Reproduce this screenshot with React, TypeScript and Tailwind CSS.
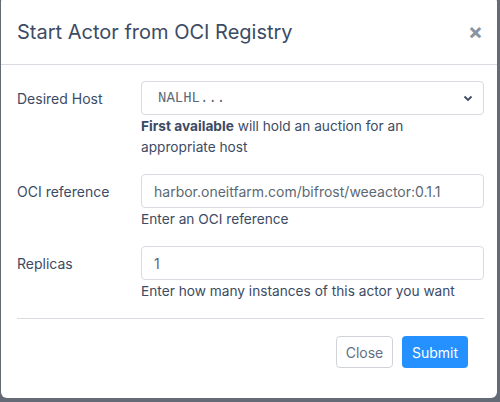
import React from 'react';

const font = { fontFamily: 'Inter, "Noto Sans", sans-serif' };

function Field({ label, children, help }: { label: string; children: React.ReactNode; help: React.ReactNode }) {
  return (
    <div className="flex mb-4">
      <div className="w-[124px] h-[34px] flex items-center text-[14px] text-[#3c4b64]">{label}</div>
      <div className="flex-1">
        {children}
        <div className="mt-px text-[13.7px] leading-[21px] text-[#3c4b64]">{help}</div>
      </div>
    </div>
  );
}

export default function App() {
  return (
    <div className="w-[500px] h-[402px] bg-[#646a76] overflow-hidden" style={font}>
      <div className="ml-px -mt-1 w-[496px] h-[402px] bg-white rounded-md">
        {/* Header */}
        <div className="h-[69px] pl-4 pr-[14px] flex items-center justify-between border-b border-[#d8dbe0]">
          <h2 className="text-[20px] text-[#3c4b64] pt-1">Start Actor from OCI Registry</h2>
          <button className="text-[22px] font-bold leading-none text-[#8a93a2] mt-px">×</button>
        </div>

        {/* Body */}
        <div className="pl-4 pr-[13px] pt-4">
          <Field
            label="Desired Host"
            help={
              <>
                <span className="font-bold">First available</span> will hold an auction for an
                <br />
                appropriate host
              </>
            }
          >
            <div className="h-[34px] border border-[#d8dbe0] rounded-[4px] flex items-center justify-between pl-4 pr-[10px]">
              <span className="text-[14px] text-[#5c6873]" style={{ fontFamily: '"Liberation Mono", monospace' }}>
                NALHL...
              </span>
              <svg width="10" height="7" viewBox="0 0 10 7" fill="none">
                <path d="M1.5 1.5 5 5l3.5-3.5" stroke="#3c4b64" strokeWidth="1.8" />
              </svg>
            </div>
          </Field>

          <Field label="OCI reference" help="Enter an OCI reference">
            <div className="h-[34px] border border-[#d8dbe0] rounded-[4px] flex items-center px-3 text-[14px] text-[#5c6873]">
              harbor.oneitfarm.com/bifrost/weeactor:0.1.1
            </div>
          </Field>

          <Field label="Replicas" help="Enter how many instances of this actor you want">
            <div className="h-[34px] border border-[#d8dbe0] rounded-[4px] flex items-center px-3 text-[14px] text-[#5c6873]">
              1
            </div>
          </Field>

          <div className="border-t border-[#d8dbe0]" />

          {/* Footer */}
          <div className="flex justify-end gap-[9px] pt-[17px] pr-4">
            <button className="h-[32px] w-[57px] rounded-[4px] border border-[#d0d4da] text-[14px] text-[#636f83]">
              Close
            </button>
            <button className="h-[32px] w-[66px] rounded-[4px] bg-[#2590ff] text-[14px] text-white">Submit</button>
          </div>
        </div>
      </div>
    </div>
  );
}
